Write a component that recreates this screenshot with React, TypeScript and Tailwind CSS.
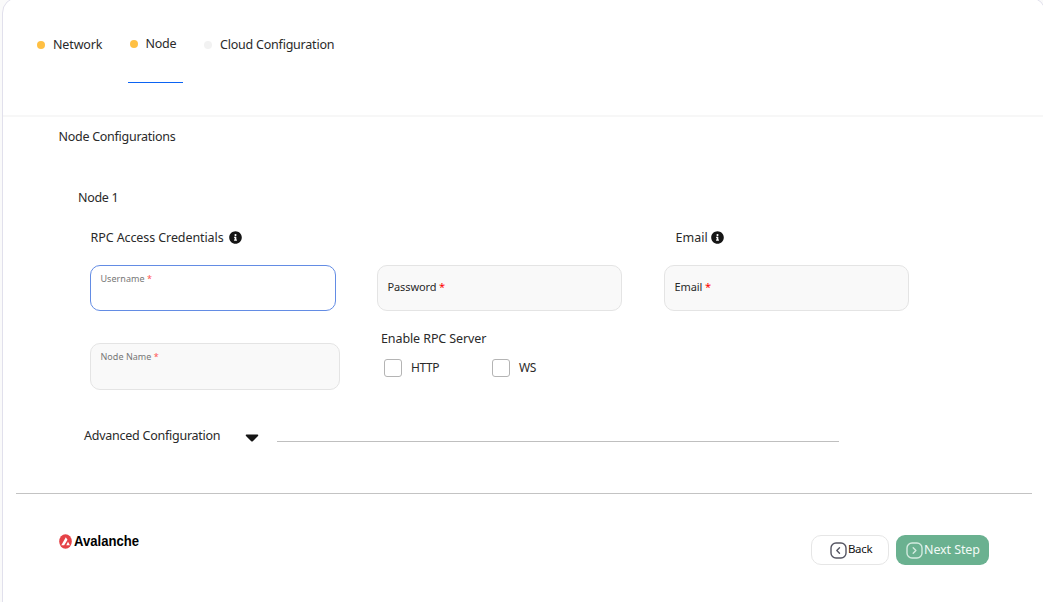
import type { ReactNode } from "react";

function InfoIcon() {
  return (
    <svg className="size-[13px] shrink-0" viewBox="0 0 512 512" fill="#151515">
      <path d="M256 8C119 8 8 119 8 256s111 248 248 248 248-111 248-248S393 8 256 8zm0 110a42 42 0 1 1 0 84 42 42 0 0 1 0-84zm56 254c0 7-5 12-12 12h-88c-7 0-12-5-12-12v-24c0-7 5-12 12-12h12v-64h-12c-7 0-12-5-12-12v-24c0-7 5-12 12-12h64c7 0 12 5 12 12v100h12c7 0 12 5 12 12v24z" />
    </svg>
  );
}

function ChevronBox({ next }: { next?: boolean }) {
  return (
    <svg className="mt-px size-[17px] shrink-0" viewBox="0 0 17 17" fill="none" stroke="currentColor" strokeWidth="1.4" strokeLinecap="round" strokeLinejoin="round">
      <rect x="1" y="1" width="15" height="15" rx="5" />
      <path d={next ? "M7.2 5.8 9.9 8.5 7.2 11.2" : "M9.5 5.8 6.8 8.5 9.5 11.2"} />
    </svg>
  );
}

function Field({ label, className, floating }: { label: string; className: string; floating?: boolean }) {
  return (
    <label className={"flex rounded-[10px] border px-[9.5px] " + className}>
      <span className={floating ? "mt-[6px] text-[9px] leading-[14px] tracking-[0.03px] text-[#777]" : "mt-[13px] text-[11px] leading-4 tracking-[-0.12px] text-[#2a2a2a]"}>
        {label} <span className={floating ? "text-[#ff5555]" : "text-[#ff0000]"}>*</span>
      </span>
    </label>
  );
}

function Check({ children }: { children: ReactNode }) {
  return (
    <label className="flex items-center">
      <span className="mt-px size-[18px] rounded-[3px] border border-[#b4b4b4] bg-white" />
      <span className="ml-[9px] text-[12px] leading-[18px] tracking-[-0.4px]">{children}</span>
    </label>
  );
}

export default function App() {
  return (
    <div className="h-[602px] overflow-hidden bg-[#fafafa] pl-[2px] font-['Noto_Sans','Liberation_Sans',sans-serif] text-[12.5px] leading-[18px] text-[#2a2a2a]">
      <main className="-mt-[3px] h-[640px] w-[1044px] rounded-[16px] border border-[#e1e0ec] bg-white">
        <nav className="flex h-[119px] border-b-2 border-[#f7f7f7] pl-[34px] pt-[37px]">
          <div className="flex h-[20px] w-[91px] items-center">
            <i className="mr-2 size-2 rounded-full bg-[#ffc043]" />
            <span className="tracking-[-0.13px]">Network</span>
          </div>
          <div className="flex h-[48px] w-[55px] flex-col justify-between">
            <div className="flex pl-[2px]">
              <i className="mt-[5px] mr-[7.5px] size-2 rounded-full bg-[#ffc043]" />
              <span className="tracking-[-0.25px]">Node</span>
            </div>
            <div className="h-px bg-[#0b63f3]" />
          </div>
          <div className="ml-[21px] flex h-[20px] items-center">
            <i className="mr-2 size-2 rounded-full bg-[#f2f2f2]" />
            <span className="tracking-[-0.22px]">Cloud Configuration</span>
          </div>
        </nav>
        <section className="h-[376px] pl-[55px] pt-[11px]">
          <h2 className="pl-[0.5px] tracking-[-0.27px]">Node Configurations</h2>
          <h3 className="mt-[43px] pl-[20px] tracking-[-0.3px]">Node 1</h3>
          <div className="mt-[22px] flex pl-[32.5px]">
            <div className="flex w-[585px] items-center gap-[6px]"><span className="tracking-[-0.09px]">RPC Access Credentials</span><span className="-mt-px -ml-px"><InfoIcon /></span></div>
            <div className="flex items-center gap-[3px]"><span>Email</span><span className="-mt-px"><InfoIcon /></span></div>
          </div>
          <div className="mt-[18px] flex pl-[32px]">
            <Field label="Username" floating className="h-[46px] w-[246px] border-[#638ce4] bg-white" />
            <Field label="Password" className="ml-[41px] h-[46px] w-[245px] border-[#e4e4e4] bg-[#f9f9f9]" />
            <Field label="Email" className="ml-[42px] h-[46px] w-[245px] border-[#e4e4e4] bg-[#f9f9f9]" />
          </div>
          <div className="mt-[18px] flex pl-[32px]">
            <Field label="Node Name" floating className="mt-[14px] h-[47px] w-[250px] border-[#e4e4e4] bg-[#f9f9f9]" />
            <div className="ml-[41px]">
              <div className="mt-px tracking-[-0.1px]">Enable RPC Server</div>
              <div className="mt-[10px] flex pl-[3px]">
                <div className="w-[108px]"><Check>HTTP</Check></div>
                <Check>WS</Check>
              </div>
            </div>
          </div>
          <div className="mt-[37px] flex items-center pl-[26px]">
            <span className="w-[161px] tracking-[-0.25px]">Advanced Configuration</span>
            <svg className="mt-[3px] h-[8px] w-[14px]" viewBox="0 0 14 8" fill="#151515"><path d="M1.5.5h11c.8 0 1.1.9.5 1.4L8 6.9a1.4 1.4 0 0 1-2 0L1 1.9C.4 1.4.7.5 1.5.5Z" /></svg>
            <hr className="mt-[11px] ml-[18px] w-[562px] border-[#bfbfbf]" />
          </div>
        </section>
        <footer className="ml-[13px] flex h-[100px] w-[1016px] items-start border-t border-[#c3c3c3] pl-[43px]">
          <div className="mt-[38px] flex h-[18px] items-center">
            <svg className="h-[15px] w-[13px]" viewBox="0 0 13 15"><ellipse cx="6.5" cy="7.5" rx="6.3" ry="7.3" fill="#e54247" /><path d="M6.8 3.2 8.5 5.8 5.2 11.2H2.3ZM9 7.8l1.9 3.4H7.3Z" fill="#fff" /></svg>
            <svg className="ml-[2px] h-[24px] w-[68px] overflow-visible" viewBox="0 0 68 24"><text x="0" y="17" textLength="65" lengthAdjust="spacingAndGlyphs" className="fill-black font-['Liberation_Sans',sans-serif] text-[15.5px] font-bold">Avalanche</text></svg>
          </div>
          <button className="mt-[41px] ml-[669px] flex h-[30px] w-[78px] items-center rounded-[10px] border border-[#e6e6e6] bg-white pl-[18px] text-[11.5px] text-[#151515]">
            <span className="text-[#555562]"><ChevronBox /></span><span className="-mt-[2px] ml-px tracking-[-0.35px]">Back</span>
          </button>
          <button className="mt-[41px] ml-[7px] flex h-[30px] w-[93px] items-center rounded-[9px] bg-[#6ab190] pl-[10px] text-[12.5px] text-[#f2faf6]">
            <span className="text-[#d3eadf]"><ChevronBox next /></span><span className="ml-px whitespace-nowrap tracking-[-0.1px]">Next Step</span>
          </button>
        </footer>
      </main>
    </div>
  );
}
